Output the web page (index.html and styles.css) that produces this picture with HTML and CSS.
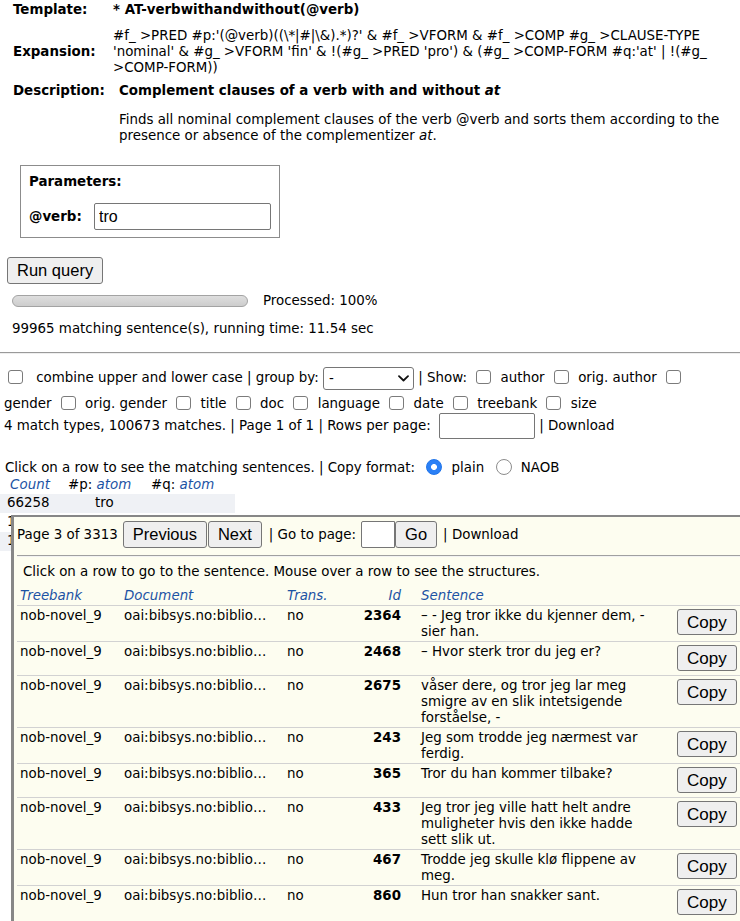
FILE: index.html
```html
<!DOCTYPE html>
<html>
<head>
<meta charset="utf-8">
<title>AT-verbwithandwithout</title>
<link rel="stylesheet" href="styles.css">
</head>
<body>
<table class="meta">
  <tr class="tpl"><th>Template:</th><td class="strong">* AT-verbwithandwithout(@verb)</td></tr>
  <tr class="exp"><th>Expansion:</th><td>#f_ &gt;PRED #p:'(@verb)((\*|#|\&amp;).*)?' &amp; #f_ &gt;VFORM &amp; #f_ &gt;COMP #g_ &gt;CLAUSE-TYPE 'nominal' &amp; #g_ &gt;VFORM 'fin' &amp; !(#g_ &gt;PRED 'pro') &amp; (#g_ &gt;COMP-FORM #q:'at' | !(#g_ &gt;COMP-FORM))</td></tr>
</table>
<table class="desc">
  <tr><th>Description:</th><td class="strong">Complement clauses of a verb with and without <i>at</i></td></tr>
  <tr class="desc-text"><th></th><td>Finds all nominal complement clauses of the verb @verb and sorts them according to the presence or absence of the complementizer <i>at</i>.</td></tr>
</table>

<div class="params">
  <div class="params-title">Parameters:</div>
  <div class="params-row"><label class="params-label">@verb:</label><input class="field verb" type="text" value="tro"></div>
</div>

<button class="btn run">Run query</button>

<div class="progress"><div class="bar"></div><span>Processed: 100%</span></div>
<div class="status">99965 matching sentence(s), running time: 11.54 sec</div>

<div class="rule"></div>

<div class="opts">
  <input type="checkbox" class="cb first"> combine upper and lower case | group by: <span class="sel"><select class="select"><option>-</option></select><svg class="chev" viewBox="0 0 11 7"><path d="M1 1.2l4.5 4.3 4.5-4.3" fill="none" stroke="#111" stroke-width="1.8" stroke-linecap="round" stroke-linejoin="round"/></svg></span> | Show: <input type="checkbox" class="cb"> author <input type="checkbox" class="cb"> orig. author <input type="checkbox" class="cb"> gender <input type="checkbox" class="cb"> orig. gender <input type="checkbox" class="cb"> title <input type="checkbox" class="cb"> doc <input type="checkbox" class="cb"> language <input type="checkbox" class="cb"> date <input type="checkbox" class="cb"> treebank <input type="checkbox" class="cb"> size
</div>
<div class="opts-line">4 match types, 100673 matches. | Page 1 of 1 | Rows per page: <input class="field rows" type="text"> | Download</div>

<div class="copyline">Click on a row to see the matching sentences. | Copy format: <input type="radio" name="fmt" class="rb" checked> plain <input type="radio" name="fmt" class="rb"> NAOB</div>

<table class="groups">
  <tr><th class="ital">Count</th><th>#p: <span class="ital">atom</span></th><th>#q: <span class="ital">atom</span></th></tr>
  <tr class="odd"><td>66258</td><td>tro</td><td></td></tr>
  <tr><td>17350</td><td>tro</td><td>at</td></tr>
  <tr class="odd"><td>16062</td><td>trodde</td><td></td></tr>
</table>

<div class="popup">
  <div class="pager">
    <span>Page 3 of 3313</span><button class="btn prev">Previous</button><button class="btn next">Next</button><span class="goto-label">| Go to page:</span><input class="field goto" type="text"><button class="btn go">Go</button><span class="dl">| Download</span>
  </div>
  <div class="prule"></div>
  <div class="hint">Click on a row to go to the sentence. Mouse over a row to see the structures.</div>
  <table class="hits">
    <colgroup><col class="c-tb"><col class="c-doc"><col class="c-tr"><col class="c-id"><col class="c-sent"><col class="c-copy"></colgroup>
    <thead>
      <tr><th>Treebank</th><th>Document</th><th>Trans.</th><th class="num">Id</th><th>Sentence</th><th></th></tr>
    </thead>
    <tbody>
      <tr><td>nob-novel_9</td><td>oai:bibsys.no:biblio…</td><td>no</td><td class="num">2364</td><td>– - Jeg tror ikke du kjenner dem, - sier han.</td><td><button class="btn copy">Copy</button></td></tr>
      <tr><td>nob-novel_9</td><td>oai:bibsys.no:biblio…</td><td>no</td><td class="num">2468</td><td>– Hvor sterk tror du jeg er?</td><td><button class="btn copy">Copy</button></td></tr>
      <tr><td>nob-novel_9</td><td>oai:bibsys.no:biblio…</td><td>no</td><td class="num">2675</td><td>våser dere, og tror jeg lar meg smigre av en slik intetsigende forståelse, -</td><td><button class="btn copy">Copy</button></td></tr>
      <tr><td>nob-novel_9</td><td>oai:bibsys.no:biblio…</td><td>no</td><td class="num">243</td><td>Jeg som trodde jeg nærmest var ferdig.</td><td><button class="btn copy">Copy</button></td></tr>
      <tr><td>nob-novel_9</td><td>oai:bibsys.no:biblio…</td><td>no</td><td class="num">365</td><td>Tror du han kommer tilbake?</td><td><button class="btn copy">Copy</button></td></tr>
      <tr><td>nob-novel_9</td><td>oai:bibsys.no:biblio…</td><td>no</td><td class="num">433</td><td>Jeg tror jeg ville hatt helt andre muligheter hvis den ikke hadde sett slik ut.</td><td><button class="btn copy">Copy</button></td></tr>
      <tr><td>nob-novel_9</td><td>oai:bibsys.no:biblio…</td><td>no</td><td class="num">467</td><td>Trodde jeg skulle klø flippene av meg.</td><td><button class="btn copy">Copy</button></td></tr>
      <tr class="last"><td>nob-novel_9</td><td>oai:bibsys.no:biblio…</td><td>no</td><td class="num">860</td><td>Hun tror han snakker sant.</td><td><button class="btn copy">Copy</button></td></tr>
    </tbody>
  </table>
</div>
</body>
</html>
```

FILE: styles.css
```css
* { box-sizing: border-box; }

html, body { overflow: hidden; }

body {
  margin: 0;
  position: relative;
  height: 921px;
  font-family: "DejaVu Sans", Verdana, sans-serif;
  font-size: 13.4px;
  line-height: 16px;
  color: #000;
  background: #fff;
}

table { border-collapse: collapse; border-spacing: 0; }
th, td { padding: 0; }

/* ---- header info ---- */
.meta { margin: 2px 0 0 13px; }
.meta th {
  width: 100px;
  text-align: left;
  vertical-align: middle;
  font-weight: bold;
}
.meta td { width: 614px; }
.meta .tpl td { padding-bottom: 10px; }
.meta .tpl th { padding-bottom: 10px; }
.strong { font-weight: bold; }

.desc { margin: 7px 0 0 13px; }
.desc th {
  width: 106px;
  text-align: left;
  font-weight: bold;
  vertical-align: top;
}
.desc td { width: 608px; }
.desc .desc-text td { padding-top: 13px; }

/* ---- parameters ---- */
.params {
  width: 260px;
  margin: 21px 0 0 20px;
  border: 1px solid #8c8c8c;
  padding: 8px 8px 7px 8px;
}
.params-title { font-weight: bold; }
.params-row {
  display: flex;
  align-items: center;
  margin-top: 13px;
}
.params-label { font-weight: bold; width: 66px; }

.field {
  border: 1px solid #767676;
  border-radius: 2px;
  background: #fff;
  font-family: "Liberation Sans", Arial, sans-serif;
  font-size: 16px;
  padding: 0 4px;
  margin: 0;
  color: #000;
}
.verb { width: 177px; height: 27px; }

.btn {
  font-family: "Liberation Sans", Arial, sans-serif;
  font-size: 16.5px;
  height: 27px;
  padding: 0 9px;
  margin: 0;
  background: #efefef;
  border: 1px solid #767676;
  border-radius: 3px;
  color: #000;
  line-height: 1;
}
.run {
  display: block;
  margin: 19px 0 0 7px;
}

.progress {
  display: flex;
  align-items: center;
  margin: 11px 0 0 12px;
  height: 12px;
}
.bar {
  width: 236px;
  height: 12px;
  border: 1px solid #a3a3a3;
  border-radius: 6px;
  background: linear-gradient(#dedede, #cdcdcd);
  margin-right: 15px;
}
.status { margin: 14px 0 0 12px; }

.rule {
  margin-top: 15px;
  border-top: 1px solid #9a9a9a;
  border-bottom: 1px solid #eeeeee;
}

/* ---- options ---- */
.opts {
  margin-top: 11px;
  padding-left: 4px;
  padding-right: 10px;
  line-height: 26px;
}
.cb {
  appearance: none;
  -webkit-appearance: none;
  width: 15px;
  height: 14px;
  border: 1px solid #7b7b7b;
  border-radius: 3px;
  background: #fff;
  margin: 0 5px 0 5px;
  vertical-align: -2px;
}
.cb.first { margin-left: 4px; margin-right: 9px; }

.sel {
  display: inline-grid;
  vertical-align: middle;
}
.sel > * { grid-area: 1 / 1; }
.select {
  appearance: none;
  -webkit-appearance: none;
  width: 91px;
  height: 23px;
  border: 1px solid #767676;
  border-radius: 3px;
  background: #fff;
  font-family: "DejaVu Sans", Verdana, sans-serif;
  font-size: 13.4px;
  padding: 0 0 0 5px;
  margin: 0;
  color: #000;
}
.chev {
  width: 11px;
  height: 7px;
  justify-self: end;
  align-self: center;
  margin-right: 5px;
  pointer-events: none;
}

.opts-line { margin-top: -4px; padding-left: 4px; line-height: 26px; }
.rows { width: 96px; height: 26px; vertical-align: middle; margin-left: 4px; }

.copyline { margin-top: 20px; padding-left: 5px; }
.rb {
  appearance: none;
  -webkit-appearance: none;
  width: 16px;
  height: 16px;
  border-radius: 50%;
  border: 1px solid #8c8c8c;
  background: #fff;
  margin: 0 5px 0 7px;
  vertical-align: -3px;
}
.rb:checked {
  border-color: #1f74ea;
  background: radial-gradient(circle, #fff 0 2.6px, #2b80f6 3.3px);
}

.ital { font-style: italic; color: #1c53a4; font-weight: normal; }

.groups { margin-top: 1px; width: 235px; }
.groups th { font-weight: normal; padding: 0 0 1px; text-align: left; }
.groups th:first-child { width: 60px; text-align: center; }
.groups th:nth-child(2) { width: 83px; padding-left: 8px; }
.groups th:nth-child(3) { padding-left: 8px; }
.groups td { padding: 1px 0 2px; text-align: left; }
.groups td:first-child { padding-left: 7px; }
.groups td:nth-child(2) { padding-left: 35px; }
.groups tr.odd td { background: #eff1f5; }

/* ---- popup ---- */
.popup {
  position: absolute;
  left: 11px;
  top: 515px;
  width: 760px;
  height: 420px;
  background: #fdfdf0;
  border-top: 2px solid #878787;
  border-left: 3px solid #878787;
}
.pager {
  display: flex;
  align-items: center;
  padding: 4px 0 0 3px;
}
.prev { margin-left: 5px; }
.next { margin-left: 1px; }
.goto-label { margin-left: 7px; }
.goto { width: 34px; height: 27px; margin-left: 5px; border-radius: 2px 0 0 2px; }
.go { margin-left: 0; }
.dl { margin-left: 6px; }

.prule {
  margin: 7px 0 0 3px;
  border-top: 1px solid #a0a0a0;
  border-bottom: 1px solid #f2f2f2;
}
.hint { margin-top: 7px; padding-left: 9px; }

.hits {
  margin: 6px 0 0 3px;
  table-layout: fixed;
  width: 726px;
}
.c-tb { width: 104px; }
.c-doc { width: 163px; }
.c-tr { width: 58px; }
.c-id { width: 76px; }
.c-sent { width: 245px; }
.c-copy { width: 80px; }

.hits th {
  font-weight: normal;
  font-style: italic;
  color: #1c53a4;
  text-align: left;
  padding: 2px 3px 1px;
  border-bottom: 1px solid #d2d2d2;
}
.hits td {
  vertical-align: top;
  padding: 2px 3px 1px;
  border-bottom: 1px solid #d2d2d2;
}
.hits .num { text-align: right; padding-right: 17px; }
.hits td.num { font-weight: bold; }
.hits td:last-child { padding-left: 14px; }
.hits tr.last td { border-bottom: none; }
.copy {
  font-size: 17px;
  height: 26px;
  margin: 1px 0 3px;
}
```
